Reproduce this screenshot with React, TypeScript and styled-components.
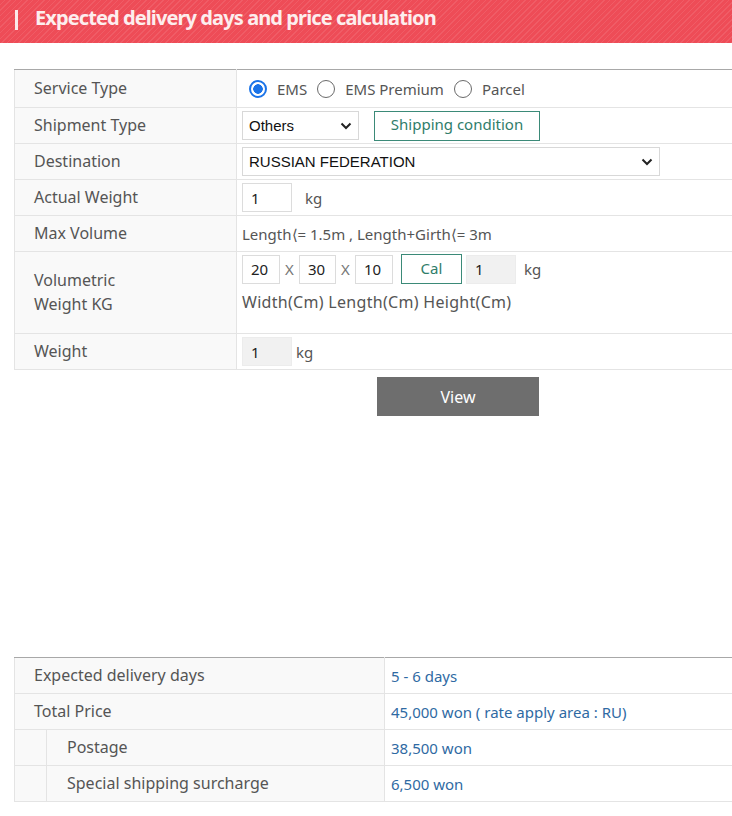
import React, { useState } from 'react';
import styled, { createGlobalStyle } from 'styled-components';

const GlobalStyle = createGlobalStyle`
  body {
    margin: 0;
    background: #fff;
    font-family: 'Noto Sans', 'Noto Sans CJK KR', sans-serif;
  }
`;

type Row = { label: string; value: string; sub?: boolean };

const results: Row[] = [
  { label: 'Expected delivery days', value: '5 - 6 days' },
  { label: 'Total Price', value: '45,000 won ( rate apply area : RU)' },
  { label: 'Postage', value: '38,500 won', sub: true },
  { label: 'Special shipping surcharge', value: '6,500 won', sub: true },
];

const services = ['EMS', 'EMS Premium', 'Parcel'];

const Chevron = () => (
  <svg width='12' height='8' viewBox='0 0 12 8'>
    <path d='M1.5 1.5 L6 6 L10.5 1.5' fill='none' stroke='#222' strokeWidth='2' />
  </svg>
);

const App = () => {
  const [service, setService] = useState('EMS');

  return (
    <Page>
      <GlobalStyle />
      <Header>
        <Bar />
        <Title>Expected delivery days and price calculation</Title>
      </Header>

      <FormTable>
        <colgroup>
          <col style={{ width: 222 }} />
          <col />
        </colgroup>
        <tbody>
          <Tr $height={38}>
            <Th>Service Type</Th>
            <Td>
              <Radios>
                {services.map((s) => (
                  <RadioLabel key={s} onClick={() => setService(s)}>
                    <Radio $checked={service === s} />
                    {s}
                  </RadioLabel>
                ))}
              </Radios>
            </Td>
          </Tr>
          <Tr>
            <Th>Shipment Type</Th>
            <Td>
              <Line>
                <SelectBox $width={117}>
                  Others
                  <Chevron />
                </SelectBox>
                <GreenButton $width={166}>Shipping condition</GreenButton>
              </Line>
            </Td>
          </Tr>
          <Tr>
            <Th>Destination</Th>
            <Td>
              <SelectBox $width={418}>
                RUSSIAN FEDERATION
                <Chevron />
              </SelectBox>
            </Td>
          </Tr>
          <Tr>
            <Th>Actual Weight</Th>
            <Td>
              <Line>
                <Field $width={50}>1</Field>
                <Unit $gap={13}>kg</Unit>
              </Line>
            </Td>
          </Tr>
          <Tr>
            <Th>Max Volume</Th>
            <Td>
              <Note>Length⟨= 1.5m , Length+Girth⟨= 3m</Note>
            </Td>
          </Tr>
          <Tr $height={82}>
            <Th>
              Volumetric
              <br />
              Weight KG
            </Th>
            <Td $top>
              <Line>
                <Field $width={38}>20</Field>
                <Times>X</Times>
                <Field $width={37}>30</Field>
                <Times>X</Times>
                <Field $width={38}>10</Field>
                <GreenButton $width={61} $ml={8}>
                  Cal
                </GreenButton>
                <Field $width={50} $readonly $ml={4}>
                  1
                </Field>
                <Unit $gap={8}>kg</Unit>
              </Line>
              <Dims>Width(Cm) Length(Cm) Height(Cm)</Dims>
            </Td>
          </Tr>
          <Tr>
            <Th>Weight</Th>
            <Td>
              <Line>
                <Field $width={50} $readonly>
                  1
                </Field>
                <Unit $gap={4}>kg</Unit>
              </Line>
            </Td>
          </Tr>
        </tbody>
      </FormTable>

      <Actions>
        <ViewButton type='button'>View</ViewButton>
      </Actions>

      <ResultTable>
        <colgroup>
          <col style={{ width: 32 }} />
          <col style={{ width: 338 }} />
          <col />
        </colgroup>
        <tbody>
          {results.map((r) => (
            <Tr key={r.label}>
              {r.sub ? (
                <>
                  <Indent />
                  <Th $sub>{r.label}</Th>
                </>
              ) : (
                <Th colSpan={2}>{r.label}</Th>
              )}
              <Value>{r.value}</Value>
            </Tr>
          ))}
        </tbody>
      </ResultTable>
    </Page>
  );
};

export default App;

// styled
const Page = styled.div`
  width: 732px;
  height: 816px;
  overflow: hidden;
`;

const Header = styled.div`
  height: 43px;
  display: flex;
  align-items: center;
  padding-left: 15px;
  background-color: #ee4c57;
  background-image: repeating-linear-gradient(
    -45deg,
    rgba(255, 255, 255, 0.09) 0 1px,
    transparent 1px 4px
  );
`;

const Bar = styled.span`
  width: 3px;
  height: 20px;
  margin-top: -3px;
  background: #fbe9ea;
`;

const Title = styled.h1`
  margin: -7px 0 0 17px;
  font-size: 20px;
  font-weight: 700;
  letter-spacing: -0.9px;
  color: #fdeeee;
  line-height: 1;
`;

const FormTable = styled.table`
  margin: 26px 0 0 14px;
  width: 760px;
  table-layout: fixed;
  border-collapse: collapse;
  border-top: 1px solid #a8a8a8;
  border-left: 1px solid #e4e4e4;
`;

const Tr = styled.tr<{ $height?: number }>`
  height: ${(p) => p.$height ?? 36}px;
  border-bottom: 1px solid #e4e4e4;
`;

const Th = styled.th<{ $sub?: boolean }>`
  padding: 0 0 1px ${(p) => (p.$sub ? '20px' : '19px')};
  text-align: left;
  font-weight: 400;
  font-size: 16px;
  color: #555;
  background: #f9f9f9;
  border-right: 1px solid #e4e4e4;
  vertical-align: middle;
  line-height: 24px;
  white-space: nowrap;
`;

const Td = styled.td<{ $top?: boolean }>`
  padding: ${(p) => (p.$top ? '2px 0 0 5px' : '0 0 0 5px')};
  vertical-align: ${(p) => (p.$top ? 'top' : 'middle')};
  font-size: 15px;
  color: #555;
`;

const Radios = styled.div`
  display: flex;
  align-items: center;
  padding-left: 7px;
`;

const RadioLabel = styled.label`
  display: flex;
  align-items: center;
  gap: 10px;
  margin-right: 10px;
  font-size: 15px;
  color: #555;
  cursor: pointer;
`;

const Radio = styled.span<{ $checked: boolean }>`
  box-sizing: border-box;
  width: 18px;
  height: 18px;
  border-radius: 50%;
  border: ${(p) => (p.$checked ? '2px solid #1a73e8' : '1px solid #6a6a6a')};
  background: ${(p) => (p.$checked ? 'radial-gradient(circle, #1a73e8 0 4.5px, #fff 5px)' : '#fff')};
`;

const Line = styled.div`
  display: flex;
  align-items: center;
`;

const SelectBox = styled.div<{ $width: number }>`
  box-sizing: border-box;
  width: ${(p) => p.$width}px;
  height: 29px;
  display: flex;
  align-items: center;
  justify-content: space-between;
  padding: 0 6px 0 6px;
  border: 1px solid #d8d8d8;
  background: #fff;
  font-family: 'Liberation Sans', Arial, sans-serif;
  font-size: 15px;
  color: #111;
`;

const GreenButton = styled.button<{ $width: number; $ml?: number }>`
  box-sizing: border-box;
  width: ${(p) => p.$width}px;
  height: 30px;
  margin-left: ${(p) => p.$ml ?? 15}px;
  padding: 0 0 3px;
  border: 1px solid #3b8a78;
  background: #fff;
  color: #2f7d6a;
  font-family: inherit;
  font-size: 15px;
  cursor: pointer;
`;

const Field = styled.div<{ $width: number; $readonly?: boolean; $ml?: number }>`
  box-sizing: border-box;
  width: ${(p) => p.$width}px;
  height: 29px;
  margin-left: ${(p) => p.$ml ?? 0}px;
  display: flex;
  align-items: center;
  padding-left: 8px;
  border: 1px solid ${(p) => (p.$readonly ? '#ececec' : '#dcdcdc')};
  background: ${(p) => (p.$readonly ? '#f1f1f1' : '#fff')};
  font-size: 15px;
  color: #222;
`;

const Unit = styled.span<{ $gap: number }>`
  margin-left: ${(p) => p.$gap}px;
  font-size: 15px;
  color: #555;
`;

const Times = styled.span`
  width: 19px;
  text-align: center;
  font-size: 15px;
  color: #777;
`;

const Note = styled.span`
  font-size: 15px;
  color: #555;
`;

const Dims = styled.div`
  margin-top: 7px;
  font-size: 16px;
  letter-spacing: 0.3px;
  color: #555;
`;

const Actions = styled.div`
  display: flex;
  margin: 7px 0 0 377px;
`;

const ViewButton = styled.button`
  width: 162px;
  height: 39px;
  border: none;
  background: #6e6e6e;
  color: #fff;
  font-family: inherit;
  font-size: 16px;
  cursor: pointer;
`;

const ResultTable = styled.table`
  margin: 241px 0 0 14px;
  width: 760px;
  table-layout: fixed;
  border-collapse: collapse;
  border-top: 1px solid #a8a8a8;
  border-left: 1px solid #e4e4e4;
`;

const Indent = styled.td`
  padding: 0;
  background: #f9f9f9;
  border-right: 1px solid #e4e4e4;
`;

const Value = styled.td`
  padding: 0 0 0 6px;
  font-size: 15px;
  color: #2f6aa3;
  border-left: 1px solid #e4e4e4;
`;
